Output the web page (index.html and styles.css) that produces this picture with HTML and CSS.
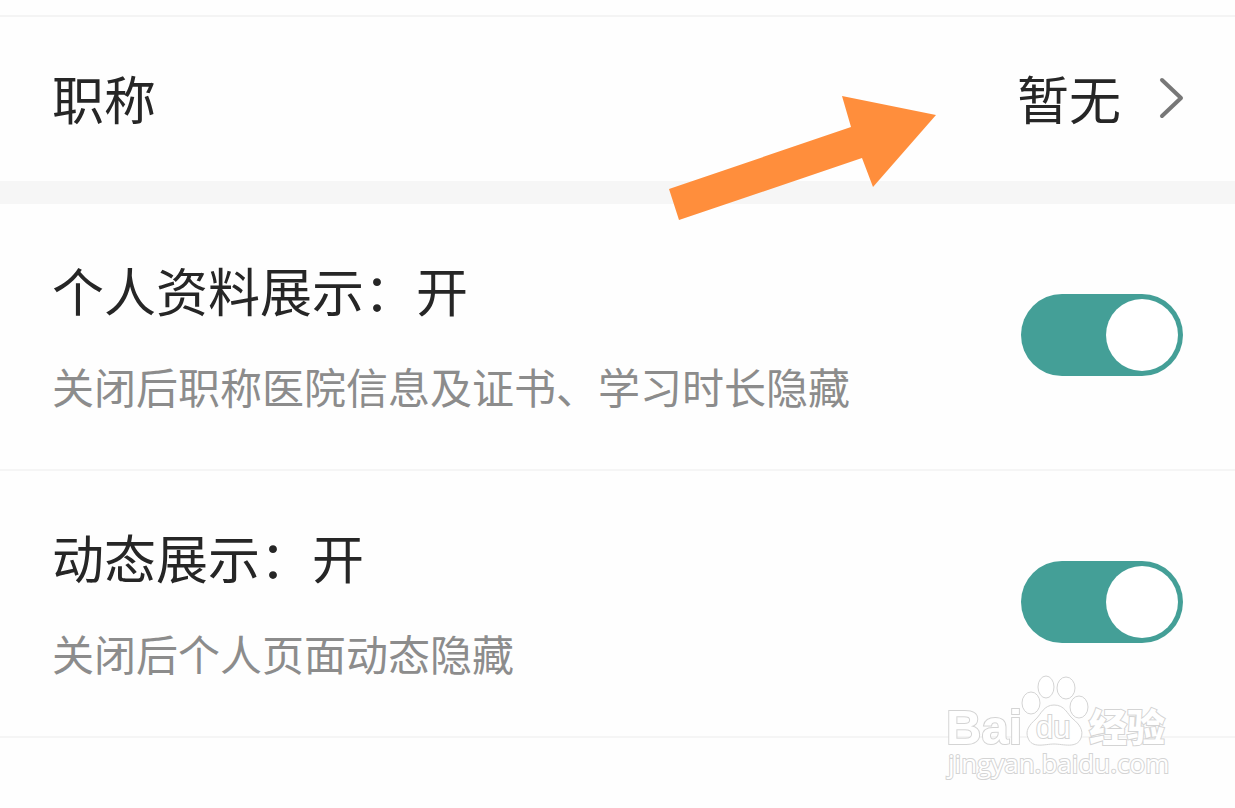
FILE: index.html
```html
<!DOCTYPE html>
<html lang="zh-CN">
<head>
<meta charset="utf-8">
<meta name="viewport" content="width=device-width, initial-scale=1">
<title>个人资料设置</title>
<link rel="stylesheet" href="styles.css">
</head>
<body>
<main class="settings">
  <a class="row row-link" href="#title">
    <span class="row-title">职称</span>
    <span class="row-value">暂无
      <svg class="chevron" viewBox="0 0 26 42" aria-hidden="true"><path d="M5 3 24 21 5 39"/></svg>
    </span>
  </a>
  <div class="row row-switch">
    <label class="row-text" for="profile">
      <span class="row-title">个人资料展示：开</span>
      <span class="row-note">关闭后职称医院信息及证书、学习时长隐藏</span>
    </label>
    <input class="switch" type="checkbox" role="switch" id="profile" checked>
  </div>
  <div class="row row-switch">
    <label class="row-text" for="activity">
      <span class="row-title">动态展示：开</span>
      <span class="row-note">关闭后个人页面动态隐藏</span>
    </label>
    <input class="switch" type="checkbox" role="switch" id="activity" checked>
  </div>
</main>
<svg class="arrow" viewBox="0 0 300 150" aria-hidden="true"><path d="M19 109 201 47 192 16 286 35 223 107 212 78 29 140Z"/></svg>
<svg class="watermark" viewBox="0 0 250 130">
  <text class="mark-latin" x="11" y="79">Bai</text>
  <g>
    <ellipse cx="96" cy="38" rx="9" ry="11"/>
    <ellipse cx="111" cy="22" rx="8" ry="11"/>
    <ellipse cx="131" cy="23" rx="9" ry="11"/>
    <ellipse cx="144" cy="42" rx="9" ry="11"/>
    <path d="M119 40C109 40 106 49 101 54C94 60 90 66 93 73C97 84 110 79 119 79C128 79 142 84 146 73C149 65 144 59 138 54C132 49 130 40 119 40Z"/>
  </g>
  <text class="mark-du" x="101" y="73">du</text>
  <text class="mark-cjk" x="154" y="76">经验</text>
  <text class="mark-url" x="13" y="108">jingyan.baidu.com</text>
</svg>
</body>
</html>
```
FILE: styles.css
```css
* {
  box-sizing: border-box;
}

body {
  position: relative;
  min-height: 100vh;
  margin: 0;
  overflow-x: hidden;
  background: #fefefe;
  color: #262626;
  font-family: "Noto Sans CJK SC", sans-serif;
}

.settings {
  padding-top: 15px;
}

.row {
  display: flex;
  align-items: center;
  justify-content: space-between;
  padding: 0 52px;
}

.row-link {
  padding-top: 45px;
  padding-bottom: 47px;
  border-top: 2px solid #f4f4f4;
  border-bottom: 23px solid #f6f6f6;
  color: inherit;
  text-decoration: none;
}

.row-switch {
  padding-top: 50px;
  padding-bottom: 53px;
  border-bottom: 2px solid #f5f5f5;
}

.row-text {
  display: flex;
  flex-direction: column;
  gap: 30px;
}

.row-title,
.row-value {
  font-size: 52px;
  line-height: 72px;
}

.row-value {
  display: flex;
  align-items: center;
  gap: 36px;
}

.row-note {
  color: #8c8c8c;
  font-size: 42px;
  line-height: 60px;
}

.chevron {
  width: 26px;
  height: 42px;
  overflow: visible;
  fill: none;
  stroke: #777;
  stroke-width: 4;
  stroke-linecap: round;
  stroke-linejoin: round;
}

.switch {
  flex: none;
  display: flex;
  justify-content: flex-end;
  width: 162px;
  height: 82px;
  margin: 0;
  padding: 5px;
  border-radius: 41px;
  background: #449f97;
  appearance: none;
}

.switch::before {
  content: "";
  width: 72px;
  height: 72px;
  border-radius: 50%;
  background: #fff;
}

.switch:not(:checked) {
  justify-content: flex-start;
  background: #ccc;
}

.arrow {
  position: absolute;
  top: 80px;
  right: 285px;
  width: 300px;
  height: 150px;
  fill: #ff8e3c;
  pointer-events: none;
}

.watermark {
  position: absolute;
  top: 665px;
  right: 50px;
  width: 250px;
  height: 130px;
  fill: #fff;
  stroke: #d4d4d4;
  stroke-width: 1;
  pointer-events: none;
}

.watermark text {
  stroke-width: 2;
  paint-order: stroke;
}

.mark-latin {
  font: bold 49px "Liberation Sans", sans-serif;
}

.mark-du {
  font: 31px "Liberation Sans", sans-serif;
}

.mark-cjk {
  font: 900 38px "Noto Sans CJK SC", sans-serif;
}

.mark-url {
  font: 26px "Open Sans", sans-serif;
}
```
